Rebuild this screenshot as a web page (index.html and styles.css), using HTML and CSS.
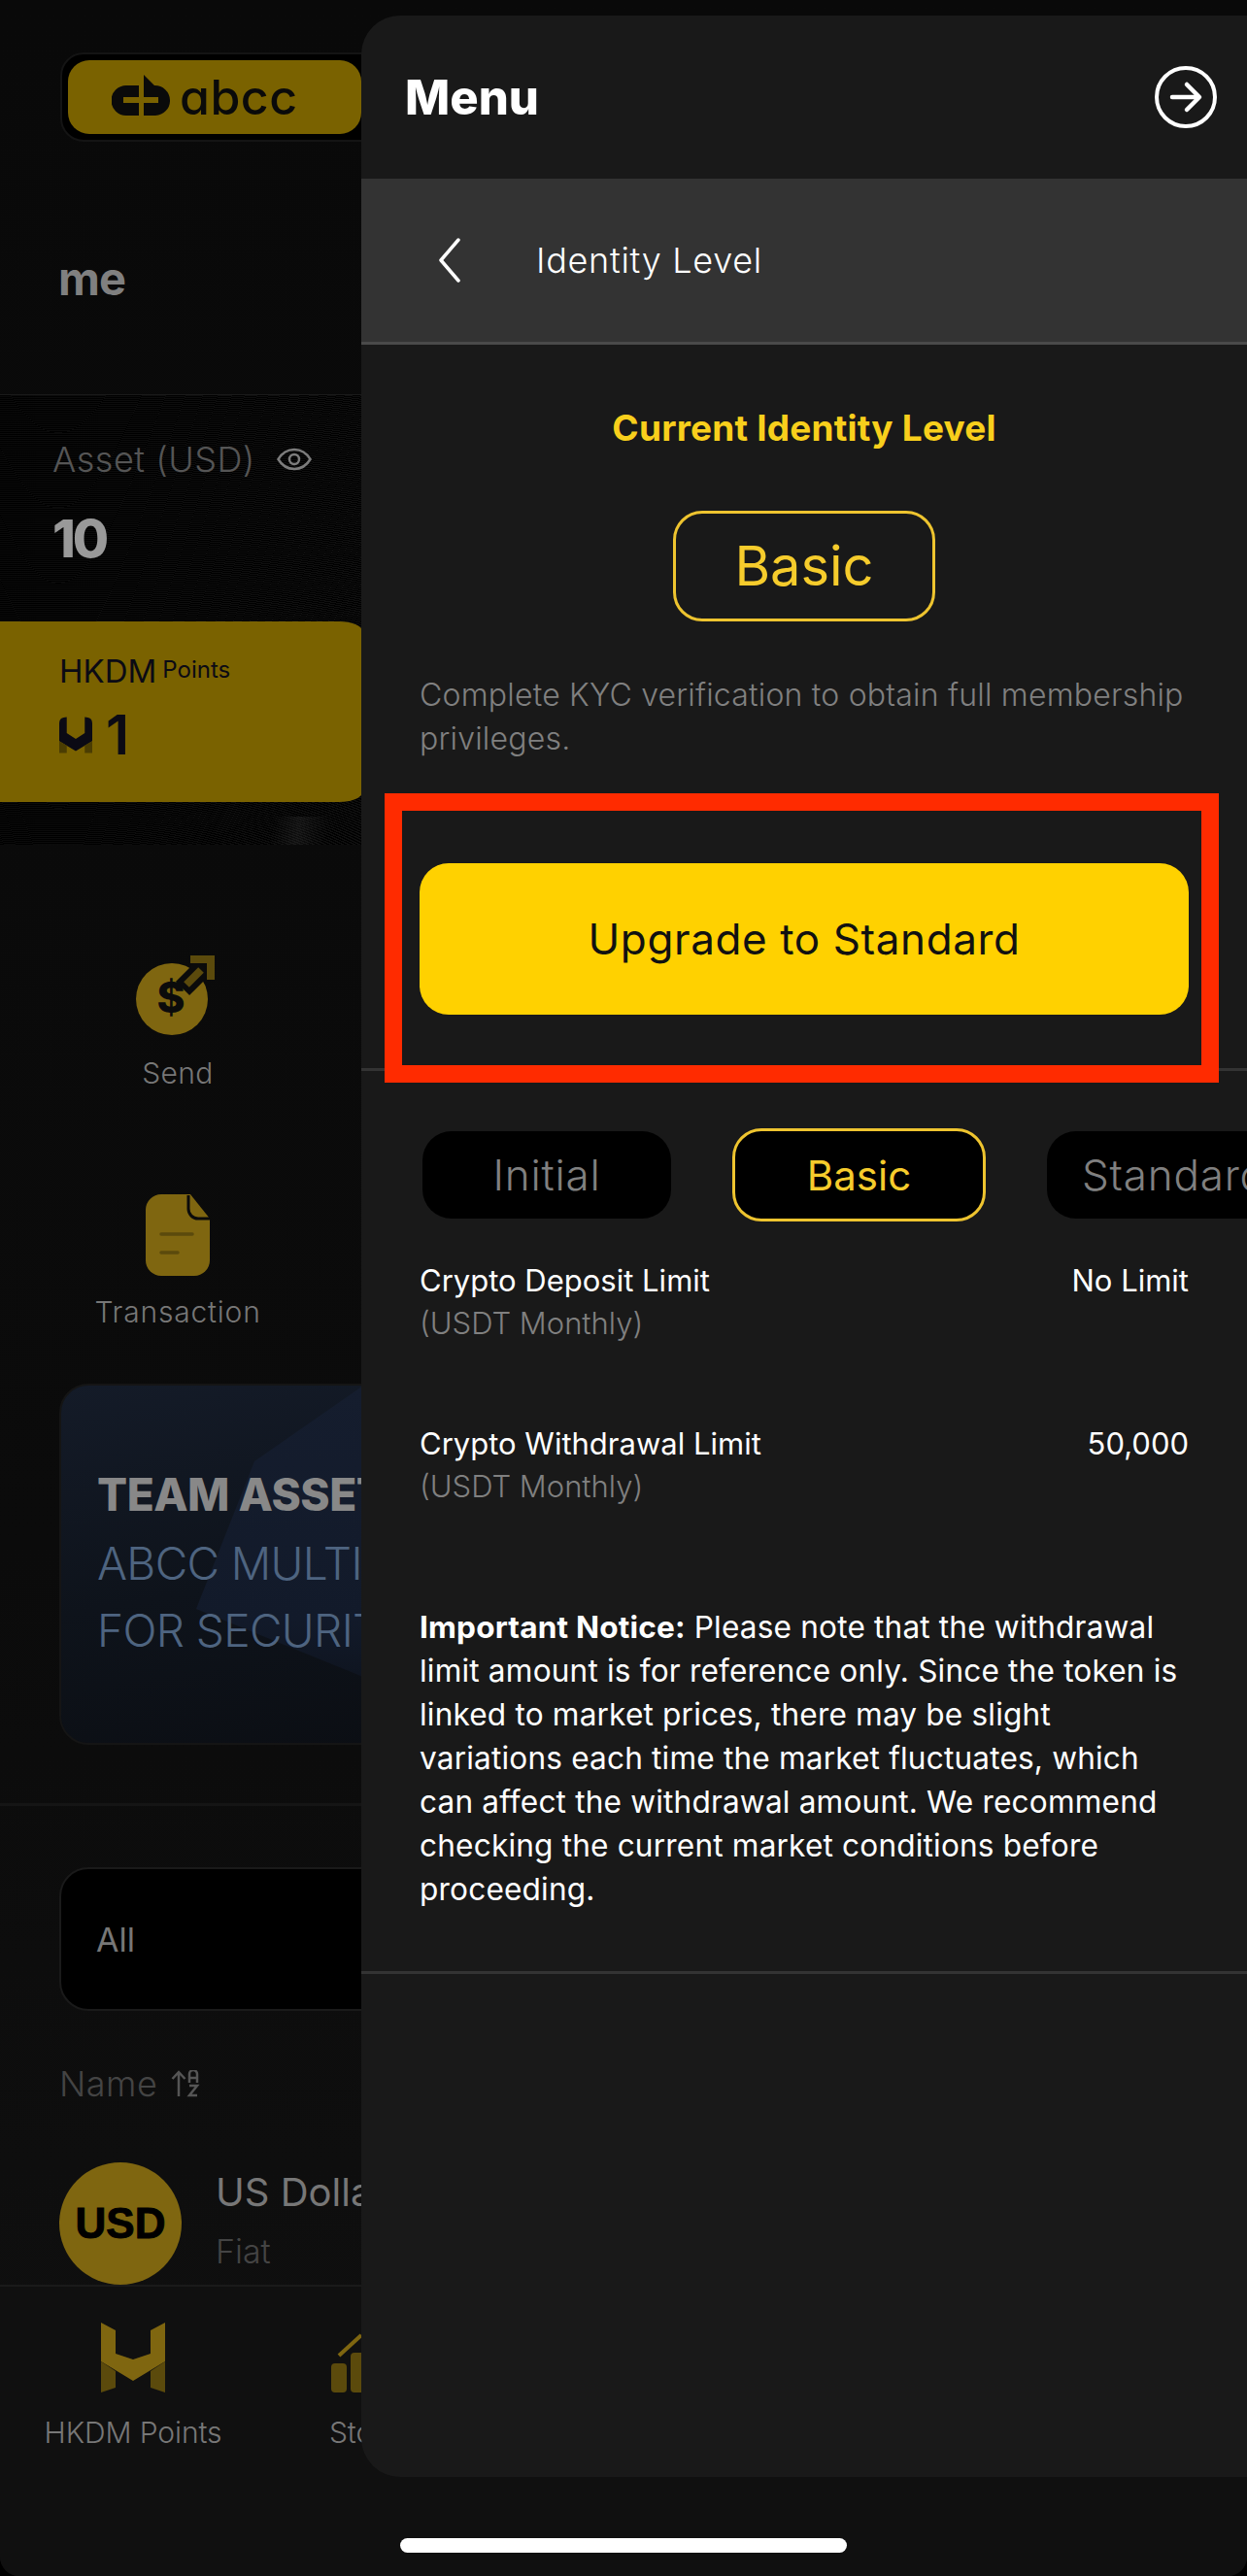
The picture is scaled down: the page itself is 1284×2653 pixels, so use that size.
FILE: index.html
```html
<!DOCTYPE html>
<html lang="en">
<head>
<meta charset="utf-8">
<title>Identity Level</title>
<link rel="stylesheet" href="styles.css">
</head>
<body>
<div class="screen">
  <div class="app">
    <header class="top">
      <div class="logo-ring">
        <div class="logo">
          <svg class="logo-mark" viewBox="0 0 60 42"><path d="M15 11h13v31H15A15.500 15.500 0 0 1 15 11zM33 0l11 11a15.500 15.500 0 0 1 1 31H33z" fill="#0a0a0a"/><path d="M12 23h16v6H12zM33 23h15v6H33z" fill="#7a6200"/></svg>
          <span class="logo-word">abcc</span>
        </div>
      </div>
      <div class="username">me</div>
    </header>
    <section class="asset">
      <div class="asset-label">Asset (USD)
        <svg class="eye" viewBox="0 0 36 24" fill="none" stroke="#7c7c7c" stroke-width="2.500"><path d="M1.500 12C6 4.500 12 2 18 2s12 2.500 16.500 10C30 19.500 24 22 18 22S6 19.500 1.500 12z"/><circle cx="18" cy="12" r="5"/></svg>
      </div>
      <div class="asset-value">10</div>
      <div class="points">
        <div class="points-title"><span class="hkdm">HKDM</span><span class="points-sup">Points</span></div>
        <div class="points-value">
          <svg class="m-small" viewBox="0 0 66 72"><path d="M0 12Q0 0 15 0V32L33 44 51 32V0Q66 0 66 12V48L33 68 0 48z" fill="#0b0a14"/><path d="M0 48l15 9v15H0zM66 48L51 57v15h15z" fill="#4b3d02"/></svg>
          <span>1</span>
        </div>
      </div>
    </section>
    <section class="actions">
      <div class="action">
        <svg class="send-icon" viewBox="0 0 82 82">
          <circle cx="37" cy="45" r="37" fill="#7f6610"/>
          <path d="M48 34L70 12" stroke="#0b0b0b" stroke-width="20"/>
          <path d="M52 30l15-15" stroke="#5b4a0c" stroke-width="8"/>
          <path d="M56 0h25v25h-8V8H56z" fill="#5b4a0c"/>
          <text x="36" y="59" class="dollar">$</text>
        </svg>
        <div class="action-label">Send</div>
      </div>
      <div class="action action-second">
        <svg class="doc-icon" viewBox="0 0 66 84">
          <path d="M16 0h30l20 25v43a16 16 0 0 1-16 16H16A16 16 0 0 1 0 68V16A16 16 0 0 1 16 0z" fill="#7f6610"/>
          <path d="M44 1v14a10 10 0 0 0 10 10h12" fill="none" stroke="#0b0b0b" stroke-width="3"/>
          <path d="M16 41h32M16 60h17" stroke="#5b4a0c" stroke-width="3.500" stroke-linecap="round"/>
        </svg>
        <div class="action-label">Transaction</div>
      </div>
    </section>
    <section class="banner">
      <div class="banner-title">TEAM ASSETS</div>
      <div class="banner-sub">ABCC MULTI-SIGN WALLET<br>FOR SECURITY</div>
    </section>
    <section class="list">
      <div class="filter">All</div>
      <div class="sort">Name
        <svg class="sort-icon" viewBox="0 0 30 28" fill="none" stroke="#555" stroke-width="2.500"><path d="M8 27V2M1.500 9L8 2l6.500 7"/><path d="M19 13V4a3.500 3.500 0 0 1 8 0v9M19 8h8M19 16h8l-8 10h8"/></svg>
      </div>
      <div class="coin">
        <div class="coin-badge">USD</div>
        <div class="coin-text">
          <div class="coin-name">US Dollar</div>
          <div class="coin-type">Fiat</div>
        </div>
      </div>
    </section>
    <nav class="nav">
      <div class="nav-item">
        <svg class="nav-m" viewBox="0 0 66 72"><path d="M0 0l15 8v24l18 6 18-6V8l15-8v40L33 60 0 40z" fill="#7f6610"/><path d="M0 40l15 10v17L0 72zM66 40L51 50v17l15 5z" fill="#5b4a0c"/></svg>
        <div class="nav-label">HKDM Points</div>
      </div>
      <div class="nav-item nav-second">
        <svg class="nav-stats" viewBox="0 0 66 62"><rect x="0" y="32" width="16" height="30" rx="4" fill="#5b4a0c"/><rect x="20" y="21" width="16" height="41" rx="4" fill="#5b4a0c"/><path d="M8 24L31 3" stroke="#7f6610" stroke-width="4" fill="none"/></svg>
        <div class="nav-label">Store</div>
      </div>
    </nav>
  </div>

  <aside class="drawer">
    <div class="drawer-head">
      <h1 class="drawer-title">Menu</h1>
      <svg class="close-icon" viewBox="0 0 64 64" fill="none" stroke="#fff"><circle cx="32" cy="32" r="30" stroke-width="4"/><path d="M18 32h27M33 19l13 13-13 13" stroke-width="4.500" stroke-linecap="round" stroke-linejoin="round"/></svg>
    </div>
    <div class="sub-head">
      <svg class="back-icon" viewBox="0 0 22 46" fill="none" stroke="#fff" stroke-width="3.500" stroke-linecap="round" stroke-linejoin="round"><path d="M20 2L2 23l18 21"/></svg>
      <span class="sub-title">Identity Level</span>
    </div>
    <div class="current">
      <h2 class="current-title">Current Identity Level</h2>
      <div class="level-chip">Basic</div>
      <p class="current-text">Complete KYC verification to obtain full membership<br>privileges.</p>
      <button class="upgrade">Upgrade to Standard</button>
      <div class="annotation"></div>
    </div>
    <div class="limits">
      <div class="tabs">
        <div class="tab tab-initial">Initial</div>
        <div class="tab tab-active">Basic</div>
        <div class="tab tab-standard">Standard</div>
      </div>
      <div class="limit-row">
        <div class="limit-name">Crypto Deposit Limit<br><span class="limit-unit">(USDT Monthly)</span></div>
        <div class="limit-value">No Limit</div>
      </div>
      <div class="limit-row">
        <div class="limit-name">Crypto Withdrawal Limit<br><span class="limit-unit">(USDT Monthly)</span></div>
        <div class="limit-value">50,000</div>
      </div>
      <p class="notice"><strong>Important Notice:</strong> Please note that the withdrawal<br>limit amount is for reference only. Since the token is<br>linked to market prices, there may be slight<br>variations each time the market fluctuates, which<br>can affect the withdrawal amount. We recommend<br>checking the current market conditions before<br>proceeding.</p>
    </div>
  </aside>

  <div class="home-bar"></div>
</div>
</body>
</html>
```
FILE: styles.css
```css
* { box-sizing: border-box; }
html, body { margin: 0; padding: 0; background: #000; }
body { font-family: Inter, "Liberation Sans", sans-serif; }
.screen {
  position: relative;
  width: 1284px;
  height: 2653px;
  overflow: hidden;
  background: linear-gradient(#090909, #0b0b0b 60%, #101010);
  border-radius: 0 0 20px 20px;
}
.app { display: flex; flex-direction: column; height: 100%; }

/* background page */
.top { height: 406px; padding: 54px 0 0 62px; }
.logo-ring {
  width: 420px; height: 92px; padding: 6px;
  background: #000; border: 2px solid #141414; border-radius: 24px;
}
.logo {
  width: 302px; height: 76px; background: #7a6200; border-radius: 22px;
  display: flex; align-items: center; padding-left: 45px; gap: 10px;
}
.logo-mark { width: 60px; height: 42px; margin-top: -4px; }
.logo-word {
  font-size: 50px; line-height: 42px; color: #0a0a0a; font-weight: 500;
  font-feature-settings: "cv11"; letter-spacing: 0.5px;
}
.username { margin: 114px 0 0 -2px; font-size: 47px; line-height: 54px; font-weight: 700; color: #808080; letter-spacing: -1px; }

.asset {
  height: 464px; padding-top: 46px; border-top: 1px solid #1a1a1a;
  background:
    linear-gradient(100deg, rgba(0,0,0,0) 75%, rgba(70,70,70,.22) 82%, rgba(0,0,0,0) 90%) 0 434px / 372px 30px no-repeat,
    linear-gradient(90deg, rgba(0,0,0,.55), rgba(0,0,0,0) 60%),
    repeating-radial-gradient(ellipse at 60px 620px, #000 0 2px, #161616 2px 4px);
  display: flex; flex-direction: column;
}
.asset-label {
  margin-left: 54px; display: flex; align-items: center; gap: 22px;
  font-size: 36px; line-height: 40px; font-weight: 300; color: #555; letter-spacing: 0.5px;
}
.eye { width: 36px; height: 24px; }
.asset-value { margin: 32px 0 0 54px; font-size: 54px; line-height: 60px; font-weight: 800; color: #999; letter-spacing: -3px; }
.points {
  margin-top: 55px; width: 373px; height: 186px; padding: 29px 0 0 61px;
  background: #7a6200; border-radius: 0 24px 24px 0 / 0 10px 10px 0;
}
.points-title { display: flex; align-items: flex-start; gap: 6px; color: #0b0a14; }
.hkdm { font-size: 33px; line-height: 44px; font-weight: 400; }
.points-sup { margin-top: 6px; font-size: 24px; line-height: 30px; }
.points-value { margin-top: 22px; display: flex; align-items: center; gap: 14px; font-size: 57px; line-height: 44px; font-weight: 600; color: #0b0a14; }
.m-small { width: 34px; height: 40px; }

.actions { height: 555px; padding-top: 114px; display: flex; flex-direction: column; }
.action { width: 366px; display: flex; flex-direction: column; align-items: center; }
.action-second { margin-top: 105px; }
.action-second .action-label { margin-top: 17px; letter-spacing: 0.8px; }
.send-icon { width: 82px; height: 82px; margin-left: -4px; }
.doc-icon { width: 66px; height: 84px; }
.dollar { font-size: 44px; font-weight: 800; fill: #0b0b0b; text-anchor: middle; font-family: Inter, sans-serif; }
.action-label { margin-top: 19px; font-size: 30px; line-height: 40px; font-weight: 300; color: #777; letter-spacing: 0.3px; }

.banner {
  position: relative; overflow: hidden;
  margin: 0 0 60px 61px; width: 900px; height: 372px; padding: 82px 0 0 37px;
  border: 2px solid #151515; border-radius: 30px;
  background: linear-gradient(170deg, #141b28 0%, #0e131b 45%, #0a0c10 100%);
}
.banner::before {
  content: ""; position: absolute; left: 0; top: 0; width: 900px; height: 372px;
  background: linear-gradient(180deg, #151d2e, #121a2a 65%, #0b0e14);
  clip-path: polygon(311px 0, 900px 0, 900px 372px, 311px 300px, 139px 230px, 199px 78px);
}
.banner-title, .banner-sub { position: relative; }
.banner-title { font-size: 46px; line-height: 60px; font-weight: 800; color: #888; white-space: nowrap; letter-spacing: -0.5px; }
.banner-sub { margin-top: 7px; font-size: 46px; line-height: 69px; font-weight: 300; color: #4e6480; white-space: nowrap; letter-spacing: -0.6px; }

.list { height: 496px; padding: 63px 0 0 61px; border-top: 3px solid #151515; overflow: hidden; }
.filter {
  width: 900px; height: 148px; padding-left: 36px; display: flex; align-items: center;
  background: #000; border: 2px solid #1a1a1a; border-radius: 30px;
  font-size: 34px; font-weight: 400; color: #777;
}
.sort { margin-top: 53px; display: flex; align-items: center; gap: 14px; font-size: 36px; line-height: 44px; font-weight: 300; color: #444; letter-spacing: 0.5px; }
.sort-icon { width: 30px; height: 28px; }
.coin { margin-top: 59px; display: flex; align-items: flex-start; gap: 35px; }
.coin-badge {
  flex: none; width: 126px; height: 126px; border-radius: 50%; background: #7f6610;
  display: flex; align-items: center; justify-content: center;
  font-family: "Liberation Sans", sans-serif; font-size: 44px; font-weight: 700; color: #000;
  -webkit-text-stroke: 1px #000;
}
.coin-name { margin-top: 8px; font-size: 40px; line-height: 46px; font-weight: 400; color: #777; white-space: nowrap; }
.coin-type { margin-top: 18px; font-size: 34px; line-height: 40px; font-weight: 300; color: #444; }

.nav { flex: 1; display: flex; background: #101010; border-top: 2px solid #1a1a1a; padding-top: 37px; }
.nav-item { display: flex; flex-direction: column; align-items: center; }
.nav-item:first-child { width: 274px; }
.nav-second { margin-left: 19px; align-items: flex-start; }
.nav-m { width: 66px; height: 72px; }
.nav-stats { width: 66px; height: 62px; margin: 10px 0 0 48px; }
.nav-second .nav-label { margin-left: 46px; }
.nav-label { margin-top: 21px; font-size: 30px; line-height: 40px; font-weight: 300; color: #777; white-space: nowrap; letter-spacing: -0.1px; }

/* drawer */
.drawer {
  position: absolute; top: 16px; left: 372px; right: 0; height: 2535px;
  background: #191919; border-radius: 40px 0 0 40px; color: #fff;
  display: flex; flex-direction: column;
}
.drawer-head { height: 168px; padding: 0 31px 0 45px; display: flex; align-items: center; justify-content: space-between; }
.drawer-title { margin: 2px 0 0; font-size: 49px; line-height: 60px; font-weight: 800; }
.close-icon { width: 64px; height: 64px; }
.sub-head {
  height: 171px; padding-left: 80px; display: flex; align-items: center; gap: 78px;
  background: #333; border-bottom: 3px solid #4a4a4a;
}
.back-icon { width: 22px; height: 46px; }
.sub-title { font-size: 36px; line-height: 44px; font-weight: 300; letter-spacing: 0.7px; }
.current {
  position: relative; flex: none; height: 748px; padding: 64px 60px 0 60px;
  display: flex; flex-direction: column; align-items: center;
  border-bottom: 3px solid #333;
}
.current-title { margin: 0; font-size: 37px; line-height: 44px; font-weight: 700; color: #f8cf1c; white-space: nowrap; letter-spacing: 0.2px; }
.level-chip {
  margin-top: 63px; width: 270px; height: 114px; border: 3px solid #eec42f; border-radius: 30px;
  display: flex; align-items: center; justify-content: center;
  font-size: 56px; font-weight: 400; color: #f6cc2c;
}
.current-text { margin: 53px 0 0; width: 100%; font-size: 32px; line-height: 45px; font-weight: 300; color: #808080; white-space: nowrap; letter-spacing: 0.2px; }
.upgrade {
  margin-top: 106px; width: 792px; height: 156px; border: 0; border-radius: 30px;
  background: #ffd100; color: #111; font: 400 44px/50px Inter, sans-serif; letter-spacing: 0.6px;
}
.annotation {
  position: absolute; left: 24px; top: 462px; width: 859px; height: 298px;
  border: 18px solid #ff2b00; pointer-events: none;
}
.limits { flex: none; height: 930px; padding: 59px 60px 0 60px; overflow: hidden; border-bottom: 3px solid #333; }
.tabs { display: flex; align-items: center; gap: 63px; width: 1000px; margin-left: 3px; }
.tab {
  height: 90px; border-radius: 30px; background: #000; color: #808080;
  display: flex; align-items: center; justify-content: center;
  font-size: 44px; font-weight: 300; letter-spacing: 0.8px;
}
.tab-initial { width: 256px; }
.tab-active { width: 261px; height: 96px; border: 3px solid #eec42f; color: #f6cc2c; font-weight: 400; font-size: 42px; letter-spacing: 0; }
.tab-standard { width: 300px; justify-content: flex-start; padding-left: 36px; }
.limit-row {
  width: 792px; margin-top: 39px; display: flex; justify-content: space-between;
  font-size: 31px; line-height: 44px; font-weight: 400;
}
.limit-row + .limit-row { margin-top: 80px; }
.limit-unit { color: #808080; font-weight: 300; }
.notice { margin: 100px 0 0; font-size: 31.6px; line-height: 45px; font-weight: 400; white-space: nowrap; letter-spacing: 0.17px; }
.notice strong { font-weight: 700; }

.home-bar { position: absolute; left: 412px; top: 2614px; width: 460px; height: 15px; border-radius: 8px; background: #fff; }
```
